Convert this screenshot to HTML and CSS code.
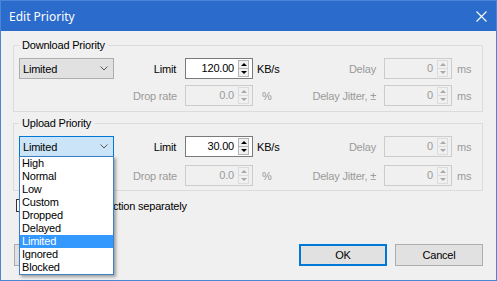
FILE: index.html
```html
<!DOCTYPE html>
<html>
<head>
  <meta charset="UTF-8">
  <meta name="viewport" content="width=device-width, initial-scale=1.0">
  <title>Edit Priority</title>
  <link rel="stylesheet" href="styles.css">
</head>
<body>
  <div class="window">
    <div class="title-bar">
      <span class="title">Edit Priority</span>
      <div class="close-button">
        <svg xmlns="http://www.w3.org/2000/svg" width="11" height="11" viewBox="0 0 11 11">
          <path d="M0.5 0.5L10.5 10.5M10.5 0.5L0.5 10.5" stroke="#ffffff" stroke-width="1.1" fill="none"/>
        </svg>
      </div>
    </div>

    <div class="dialog-body">
      <fieldset class="group">
        <legend>Download Priority</legend>
        <div class="group-grid">
          <div class="combo">
            <span>Limited</span>
            <svg class="chevron" xmlns="http://www.w3.org/2000/svg" width="8" height="5" viewBox="0 0 8 5"><path d="M0.5 0.5L4 4L7.5 0.5" stroke="#555555" fill="none"/></svg>
          </div>
          <span class="field-label">Limit</span>
          <div class="spin">
            <span class="spin-value">120.00</span>
            <div class="spin-buttons"><span class="spin-up"></span><span class="spin-down"></span></div>
          </div>
          <span class="unit">KB/s</span>
          <span class="field-label disabled">Delay</span>
          <div class="spin disabled">
            <span class="spin-value">0</span>
            <div class="spin-buttons"><span class="spin-up"></span><span class="spin-down"></span></div>
          </div>
          <span class="unit unit-ms disabled">ms</span>

          <span></span>
          <span class="field-label disabled">Drop rate</span>
          <div class="spin disabled">
            <span class="spin-value">0.0</span>
            <div class="spin-buttons"><span class="spin-up"></span><span class="spin-down"></span></div>
          </div>
          <span class="unit unit-percent disabled">%</span>
          <span class="field-label disabled">Delay Jitter, ±</span>
          <div class="spin disabled">
            <span class="spin-value">0</span>
            <div class="spin-buttons"><span class="spin-up"></span><span class="spin-down"></span></div>
          </div>
          <span class="unit unit-ms disabled">ms</span>
        </div>
      </fieldset>

      <fieldset class="group group-upload">
        <legend>Upload Priority</legend>
        <div class="group-grid">
          <div class="combo focused">
            <span>Limited</span>
            <svg class="chevron" xmlns="http://www.w3.org/2000/svg" width="8" height="5" viewBox="0 0 8 5"><path d="M0.5 0.5L4 4L7.5 0.5" stroke="#555555" fill="none"/></svg>
            <ul class="combo-list">
              <li>High</li>
              <li>Normal</li>
              <li>Low</li>
              <li>Custom</li>
              <li>Dropped</li>
              <li>Delayed</li>
              <li class="selected">Limited</li>
              <li>Ignored</li>
              <li>Blocked</li>
            </ul>
          </div>
          <span class="field-label">Limit</span>
          <div class="spin">
            <span class="spin-value">30.00</span>
            <div class="spin-buttons"><span class="spin-up"></span><span class="spin-down"></span></div>
          </div>
          <span class="unit">KB/s</span>
          <span class="field-label disabled">Delay</span>
          <div class="spin disabled">
            <span class="spin-value">0</span>
            <div class="spin-buttons"><span class="spin-up"></span><span class="spin-down"></span></div>
          </div>
          <span class="unit unit-ms disabled">ms</span>

          <span></span>
          <span class="field-label disabled">Drop rate</span>
          <div class="spin disabled">
            <span class="spin-value">0.0</span>
            <div class="spin-buttons"><span class="spin-up"></span><span class="spin-down"></span></div>
          </div>
          <span class="unit unit-percent disabled">%</span>
          <span class="field-label disabled">Delay Jitter, ±</span>
          <div class="spin disabled">
            <span class="spin-value">0</span>
            <div class="spin-buttons"><span class="spin-up"></span><span class="spin-down"></span></div>
          </div>
          <span class="unit unit-ms disabled">ms</span>
        </div>
      </fieldset>

      <div class="checkbox-row">
        <span class="checkbox"></span>
        <span>Limit each connection separately</span>
      </div>

      <div class="button-row">
        <button class="dialog-button" aria-label="Reset"></button>
        <div class="button-group">
          <button class="dialog-button default">OK</button>
          <button class="dialog-button">Cancel</button>
        </div>
      </div>
    </div>
  </div>
</body>
</html>
```

FILE: styles.css
```css
:root {
  --title-color: #2b6bcb;
  --window-border: #4a86d8;
  --background-color: #f0f0f0;
  --group-border: #dcdcdc;
  --control-border: #adadad;
  --control-face: #e1e1e1;
  --input-border: #7a7a7a;
  --disabled-text: #9a9a9a;
  --disabled-border: #cccccc;
  --accent-color: #0078d7;
  --highlight-color: #3399ff;
}

body {
  margin: 0;
  padding: 0;
  overflow: hidden;
  font-family: "Liberation Sans", Arial, sans-serif;
  font-size: 11px;
  letter-spacing: -0.2px;
  color: #000000;
}

.window {
  width: 497px;
  height: 281px;
  box-sizing: border-box;
  border: 1px solid var(--window-border);
  background-color: var(--background-color);
  display: flex;
  flex-direction: column;
}

.title-bar {
  height: 30px;
  flex-shrink: 0;
  background-color: var(--title-color);
  display: flex;
  align-items: center;
  justify-content: space-between;
  padding: 0 9px 0 8px;
}

.title {
  font-family: "Noto Sans", "Open Sans", sans-serif;
  font-size: 12px;
  letter-spacing: 0;
  color: #ffffff;
}

.close-button {
  display: flex;
}

.dialog-body {
  flex: 1;
  display: flex;
  flex-direction: column;
  padding: 7px 13px 14px 12px;
}

.group {
  margin: 0;
  padding: 6px 5px 5px 5px;
  border: 1px solid var(--group-border);
  min-width: 0;
}

.group legend {
  padding: 0 3px;
  line-height: 14px;
}

.group-upload {
  margin-top: 4px;
  padding-bottom: 4px;
}

.group-grid {
  display: grid;
  grid-template-columns: 95px 71px 68px 47px 84px 68px 1fr;
  grid-auto-rows: 21px;
  row-gap: 6px;
  align-items: center;
}

.group-upload .group-grid {
  row-gap: 8px;
}

.field-label {
  text-align: right;
  padding-right: 9px;
}

.field-label.disabled {
  padding-right: 8px;
}

.unit {
  padding-left: 4px;
}

.unit-percent {
  padding-left: 9px;
}

.unit-ms {
  padding-left: 5px;
}

.disabled {
  color: var(--disabled-text);
}

/* combo box */

.combo {
  position: relative;
  height: 21px;
  box-sizing: border-box;
  border: 1px solid var(--control-border);
  background-color: var(--control-face);
  display: flex;
  align-items: center;
  justify-content: space-between;
  padding: 0 5px 0 3px;
}

.combo.focused {
  border-color: var(--accent-color);
  background-color: #cce4f7;
}

.chevron {
  display: block;
}

.combo-list {
  position: absolute;
  left: -1px;
  top: 100%;
  width: 95px;
  box-sizing: border-box;
  margin: 0;
  padding: 0;
  list-style: none;
  background-color: #ffffff;
  border: 1px solid #3c7fc4;
  box-shadow: 2px 2px 3px rgba(0, 0, 0, 0.35);
  z-index: 10;
}

.combo-list li {
  height: 13px;
  line-height: 13px;
  padding-left: 2px;
}

.combo-list li.selected {
  background-color: var(--highlight-color);
  color: #ffffff;
}

/* numeric up-down */

.spin {
  height: 21px;
  box-sizing: border-box;
  border: 1px solid var(--input-border);
  background-color: #ffffff;
  display: flex;
  padding: 1px 3px 1px 0;
}

.spin.disabled {
  border-color: var(--disabled-border);
  background-color: var(--background-color);
}

.spin-value {
  flex: 1;
  text-align: right;
  padding-right: 4px;
  line-height: 17px;
}

.spin-buttons {
  width: 11px;
  display: flex;
  flex-direction: column;
}

.spin-buttons span {
  flex: 1;
  display: flex;
  align-items: center;
  justify-content: center;
  border: 1px solid #b4b4b4;
  background-color: #f0f0f0;
}

.spin-buttons .spin-down {
  border-top: none;
}

.spin.disabled .spin-buttons span {
  border-color: #dcdcdc;
}

.spin-up::before,
.spin-down::before {
  content: "";
  border-left: 3px solid transparent;
  border-right: 3px solid transparent;
}

.spin-up::before {
  border-bottom: 3px solid #000000;
}

.spin-down::before {
  border-top: 3px solid #000000;
}

.spin.disabled .spin-up::before {
  border-bottom-color: #a8a8a8;
}

.spin.disabled .spin-down::before {
  border-top-color: #a8a8a8;
}

/* checkbox */

.checkbox-row {
  display: flex;
  align-items: center;
  gap: 4px;
  margin: 8px 0 0 3px;
  height: 13px;
}

.checkbox {
  width: 13px;
  height: 13px;
  box-sizing: border-box;
  border: 1px solid #333333;
  background-color: #ffffff;
}

/* buttons */

.button-row {
  margin-top: auto;
  display: flex;
  justify-content: space-between;
  padding-left: 1px;
}

.button-group {
  display: flex;
  gap: 8px;
}

.dialog-button {
  width: 88px;
  height: 22px;
  box-sizing: border-box;
  border: 1px solid var(--control-border);
  background-color: var(--control-face);
  font-family: inherit;
  font-size: 11px;
  letter-spacing: -0.2px;
  color: #000000;
  padding: 0;
}

.dialog-button.default {
  border: 2px solid var(--accent-color);
}
```
